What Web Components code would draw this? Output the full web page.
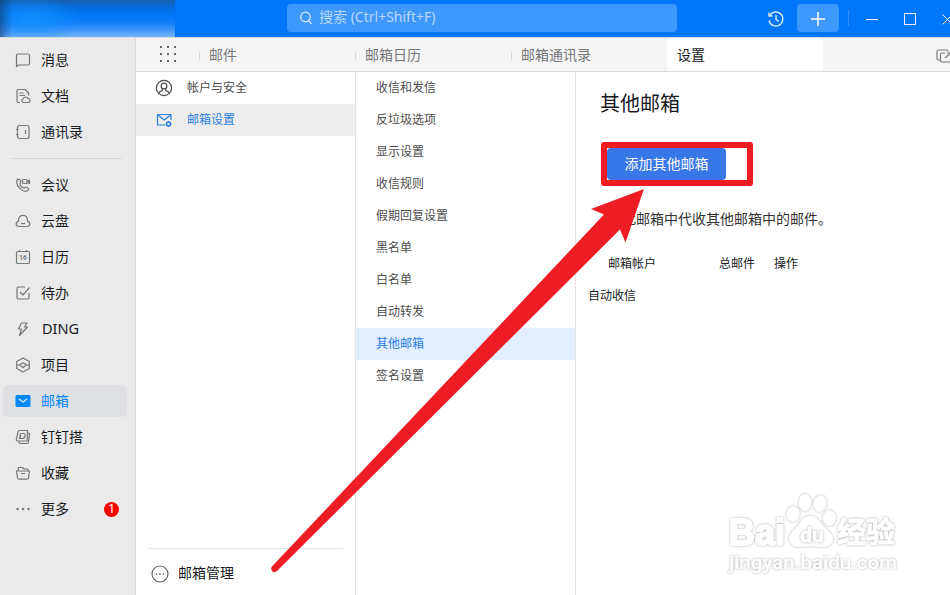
<!DOCTYPE html>
<html lang="zh-CN">
<head>
<meta charset="utf-8">
<title>设置</title>
<style>
    body {
        margin: 0;
        width: 950px;
        height: 595px;
        overflow: hidden;
        background: #fff;
        font-family: "Noto Sans CJK SC", sans-serif;
        font-size: 14px;
        color: #171a1d;
    }
</style>
</head>
<body>
<mail-app>
    <top-bar slot="top" placeholder="搜索 (Ctrl+Shift+F)"></top-bar>

    <side-item slot="side" icon="chat">消息</side-item>
    <side-item slot="side" icon="doc">文档</side-item>
    <side-item slot="side" icon="contacts">通讯录</side-item>
    <side-item slot="side" icon="call" split>会议</side-item>
    <side-item slot="side" icon="cloud">云盘</side-item>
    <side-item slot="side" icon="calendar">日历</side-item>
    <side-item slot="side" icon="todo">待办</side-item>
    <side-item slot="side" icon="ding">DING</side-item>
    <side-item slot="side" icon="project">项目</side-item>
    <side-item slot="side" icon="mail" active>邮箱</side-item>
    <side-item slot="side" icon="dingda">钉钉搭</side-item>
    <side-item slot="side" icon="folder">收藏</side-item>
    <side-item slot="side" icon="more" badge="1">更多</side-item>

    <tab-item slot="tabs">邮件</tab-item>
    <tab-item slot="tabs">邮箱日历</tab-item>
    <tab-item slot="tabs">邮箱通讯录</tab-item>
    <tab-item slot="tabs" active>设置</tab-item>

    <menu-row slot="nav" icon="user">帐户与安全</menu-row>
    <menu-row slot="nav" icon="mailset" active>邮箱设置</menu-row>

    <menu-row slot="menu">收信和发信</menu-row>
    <menu-row slot="menu">反垃圾选项</menu-row>
    <menu-row slot="menu">显示设置</menu-row>
    <menu-row slot="menu">收信规则</menu-row>
    <menu-row slot="menu">假期回复设置</menu-row>
    <menu-row slot="menu">黑名单</menu-row>
    <menu-row slot="menu">白名单</menu-row>
    <menu-row slot="menu">自动转发</menu-row>
    <menu-row slot="menu" active>其他邮箱</menu-row>
    <menu-row slot="menu">签名设置</menu-row>

    <other-mail slot="page"></other-mail>
</mail-app>
<arrow-mark></arrow-mark>
<water-mark></water-mark>

<script>
//icon drawings: [size, inner svg]
const icons = {
    chat: [16, '<path d="M1.500 14.500V3.500a1.500 1.500 0 0 1 1.500-1.500h10a1.500 1.500 0 0 1 1.500 1.500v8a1.500 1.500 0 0 1-1.500 1.500H4z"/>'],
    doc: [16, '<path d="M5 14.500H3.500A1.500 1.500 0 0 1 2 13V3a1.500 1.500 0 0 1 1.500-1.500H10L13.500 5v2.500M4.500 5h4M4.500 7.500H10"/><path d="M8.500 14.500a1.900 1.900 0 0 1-.3-3.700 2.500 2.500 0 0 1 4.700-.3 2 2 0 0 1 .3 4z"/>'],
    contacts: [16, '<rect x="2.500" y="1.500" width="11.500" height="13" rx="2"/><path d="M10.500 6v4M1 5.500h2.500M1 10.500h2.500"/>'],
    call: [16, '<path d="M2 3.200c1.500-2 2.500-1.200 3.700 1 .7 1.300-1 1.700-.8 2.800.3 1.600 2.300 3.700 3.900 4 1.200.2 1.600-1.500 2.800-.8 2.200 1.200 2.900 2.200 1 3.600C8.500 16.500.2 9 2 3.200z"/><rect x="7.500" y="2.500" width="4.500" height="4" rx="1"/><path d="M12 4.500l2.500-1.500v3.500L12 5.500"/>'],
    cloud: [16, '<path d="M4.300 13.500C.3 13.500.3 9.300 3.500 8.300 3.300 4.500 5 2.300 8 2.300s4.700 2.200 4.500 6c3.200 1 3.200 5.200-.8 5.200z"/><path d="M6 10c1.200.9 2.800.9 4 0"/>'],
    calendar: [16, '<rect x="1.500" y="2.500" width="13" height="12" rx="1.200"/><path d="M4.500 1v1.500M11.500 1v1.500"/><text x="8" y="10.800" text-anchor="middle" font-family="Roboto, sans-serif" font-size="6.500" font-weight="700" fill="currentColor" stroke="none">16</text>'],
    todo: [16, '<path d="M10 2H3.500A1.500 1.500 0 0 0 2 3.500v9A1.500 1.500 0 0 0 3.500 14h9a1.500 1.500 0 0 0 1.500-1.500V8M5 7l3 3 6.500-7.500"/>'],
    ding: [16, '<path d="M6.500 2L3.500 8h3L4.500 14.500 12.500 6H9.500L12 2z"/>'],
    project: [16, '<path d="M8 1l6.300 3.500v7L8 15l-6.300-3.500v-7z"/><path d="M2 8h2.500L8 5.700 11.500 8H14M4.500 8L8 10.500 11.500 8"/>'],
    mail: [16, '<rect x=".5" y="2" width="15" height="12" rx="1.500" fill="currentColor" stroke="none"/><path d="M4 6l4 3 4-3" stroke="#dee0e3" stroke-width="1.500"/>'],
    dingda: [16, '<path d="M4.500 1.500h8l-.3 10.500H2.500a1.200 1.200 0 0 1-1.200-1.400L3 2.800A1.500 1.500 0 0 1 4.500 1.500z"/><path d="M13 4l1.500.5-1 8.500a1.500 1.500 0 0 1-1.500 1.500H5L3.500 12.500M5.500 4.500h2.700c3.300 0 2 5-1.200 5H4.500zM6 6L4.500 9.500"/>'],
    folder: [16, '<path d="M3 6l.5-3.500h4L9 4h4v2M1.500 6h13l-1 7a1.500 1.500 0 0 1-1.500 1.200H4A1.500 1.500 0 0 1 2.500 13zM6 8.500h4"/>'],
    more: [16, '<g fill="currentColor" stroke="none"><circle cx="2.500" cy="8" r="1.200"/><circle cx="8" cy="8" r="1.200"/><circle cx="13.500" cy="8" r="1.200"/></g>'],
    search: [14, '<circle cx="6.500" cy="6" r="4.800"/><path d="M9.500 9.500l3 3.500"/>'],
    history: [18, '<path d="M2 2.500V6h3.500M2.500 6A7 7 0 1 1 2 10.500M9 5v4.500l3 2" stroke-width="1.400"/>'],
    plus: [16, '<path d="M8 1v14M1 8h14" stroke-width="1.500"/>'],
    grid: [16, '<g fill="currentColor" stroke="none">' + [1, 8, 15].map(y => [1, 8, 15].map(x => `<rect x="${x - 1}" y="${y - 1}" width="2" height="2"/>`).join('')).join('') + '</g>'],
    user: [18, '<circle cx="9" cy="9" r="7.600"/><circle cx="9" cy="7" r="2.900"/><path d="M3.700 14.300c.7-1.700 1.700-2.300 3.600-2.600V9.500M14.300 14.300c-.7-1.700-1.700-2.300-3.600-2.600V9.500"/>'],
    mailset: [16, '<path d="M9 13H1.500V2.500h13.500V8M2 3l6.200 5L14.500 3"/><circle cx="12.500" cy="12" r="2" stroke-width="1.600"/><path d="M12.500 9v1M12.500 14v1M10 10.500l.8.500M15 10.500l-.8.500M10 13.500l.8-.5M15 13.500l-.8-.5"/>'],
    dots: [18, '<circle cx="9" cy="9" r="8"/><path d="M4.700 9h1.500M8.200 9h1.500M11.700 9h1.500" stroke-width="1.600"/>'],
    popout: [18, '<path d="M5 12H3.500A1.500 1.500 0 0 1 2 10.500v-7A1.500 1.500 0 0 1 3.500 2h8A1.500 1.500 0 0 1 13 3.500M10 5H7a1.500 1.500 0 0 0-1.500 1.500v6A1.500 1.500 0 0 0 7 14h7a1.500 1.500 0 0 0 1.500-1.500V10M10 10l5.500-5M12 5h3.500v3"/>']
};

function icon(name) {
    const [size, body] = icons[name];
    return `<svg class="icon" width="${size}" height="${size}" viewBox="0 0 ${size} ${size}" fill="none" stroke="currentColor" stroke-width="1.200" stroke-linejoin="round">${body}</svg>`;
}

//base class, every element fills its shadow root from render()
class BaseElement extends HTMLElement {
    constructor() {
        super();
        this.attachShadow({mode: "open"});
    }
    connectedCallback() {
        const template = document.createElement("template");
        template.innerHTML = `<style>* { box-sizing: border-box; } svg { display: block; flex: none; } .label { margin-bottom: 2px; }</style>` + this.render();
        this.shadowRoot.appendChild(template.content.cloneNode(true));
    }
}

//page frame
class MailApp extends BaseElement {
    render() {
        return `
<style>
    :host { display: grid; grid-template: 37px 558px / 136px 814px; width: 950px; height: 595px; }
    .top { grid-column: 1 / 3; }
    .side { background: #eaeaea; border-right: 1px solid #d7d8d9; border-top: 1px solid #d9dadb; padding: 6px 8px 0 3px; display: flex; flex-direction: column; gap: 4px; }
    .main { display: flex; flex-direction: column; border-top: 1px solid #d9dadb; }
    .tabs { height: 34px; display: flex; background: #f5f5f5; border-bottom: 1px solid #d9d9d9; overflow: hidden; }
    .grid { width: 63px; padding: 8px 0 0 24px; color: #666; flex: none; }
    .pop { margin: 10px 0 0 auto; width: 15px; overflow: hidden; color: #777; }
    .cols { flex: 1; display: grid; grid-template-columns: 220px 220px 1fr; }
    .nav, .menu { border-right: 1px solid #e1e1e1; display: flex; flex-direction: column; }
    .nav { --active: #ededed; --pad: 19px; }
    .menu { --active: #e1eeff; --pad: 20px; }
    .manage { margin: auto 12px 0; height: 47px; border-top: 1px solid #e6e6e6; padding: 4px 0 0 3px; display: flex; align-items: center; gap: 9px; line-height: 20px; }
    .manage svg { color: #666; }
    .manage .label { margin-bottom: 4px; }
</style>
<div class="top"><slot name="top"></slot></div>
<div class="side"><slot name="side"></slot></div>
<div class="main">
    <div class="tabs"><div class="grid">${icon("grid")}</div><slot name="tabs"></slot><div class="pop">${icon("popout")}</div></div>
    <div class="cols">
        <div class="nav"><slot name="nav"></slot><div class="manage">${icon("dots")}<span class="label">邮箱管理</span></div></div>
        <div class="menu"><slot name="menu"></slot></div>
        <slot name="page"></slot>
    </div>
</div>`;
    }
}

class TopBar extends BaseElement {
    render() {
        return `
<style>
    :host { display: flex; height: 37px; background: #0077fa; color: #d9ebff; overflow: hidden; }
    .blur { flex: none; width: 175px; background: linear-gradient(90deg, rgba(20,70,125,.65), rgba(0,119,250,0) 12px), radial-gradient(ellipse 50px 24px at 32px 20px, rgba(20,145,255,.9), rgba(20,145,255,0)), linear-gradient(#1660b0, #056dde 8px, #0077f5 15px, #0e7cf8 22px, #3f96fa 30px, #76b4fc); }
    .search { flex: none; margin: 4px 0 0 112px; width: 390px; height: 28px; border-radius: 4px; background: #3e97fb; display: flex; align-items: center; padding-left: 12px; gap: 6px; color: #b7d9ff; line-height: 20px; font-family: "Noto Sans", "Noto Sans CJK SC", sans-serif; }
    .search svg { color: #d9ebff; }
    .search .label { width: 124px; white-space: nowrap; }
    .tools { display: flex; align-items: flex-start; flex: none; }
    .tools > * { flex: none; }
    .history { margin: 10px 12px 0 90px; }
    .plus { margin-top: 4px; width: 42px; height: 28px; padding-top: 2px; border-radius: 4px; background: #3e97fb; display: grid; place-items: center; color: #fff; }
    .line { width: 1px; height: 16px; margin: 10px 17px 0 9px; background: #338ffb; }
    .min { width: 12px; height: 1px; margin: 19px 26px 0 0; background: #e6f2ff; }
    .max { width: 12px; height: 12px; margin: 13px 26px 0 0; border: 1px solid #e6f2ff; }
    .close { margin-top: 14px; }
</style>
<div class="blur"></div>
<div class="search">${icon("search")}<span class="label">${this.getAttribute("placeholder")}</span></div>
<div class="tools">
    <div class="history">${icon("history")}</div>
    <div class="plus">${icon("plus")}</div>
    <div class="line"></div>
    <div class="min"></div>
    <div class="max"></div>
    <div class="close"><svg width="11" height="11" viewBox="0 0 11 11" fill="none" stroke="currentColor"><path d="M.5.5l10 10M10.500.5l-10 10"/></svg></div>
</div>`;
    }
}

class SideItem extends BaseElement {
    render() {
        const badge = this.getAttribute("badge");
        return `
<style>
    :host { display: block; flex: none; }
    .split { height: 1px; margin: 6px 5px 10px 8px; background: #d5d6d7; }
    .row { height: 32px; display: flex; align-items: center; padding: 0 8px 0 12px; gap: 10px; border-radius: 5px; width: 124px; line-height: 20px; }
    .row svg { color: #747677; }
    :host([icon="ding"]) .label { font-family: "Noto Sans", sans-serif; padding-left: 1px; font-size: 14.500px; }
    :host([active]) .row { background: #dee0e3; color: #0089ff; }
    :host([active]) svg { color: #0089ff; }
    .badge { margin-left: auto; width: 15px; height: 15px; border-radius: 50%; background: #f00; color: #fff; font: 12px/15px Roboto, sans-serif; text-align: center; }
</style>
${this.hasAttribute("split") ? '<div class="split"></div>' : ''}
<div class="row">${icon(this.getAttribute("icon"))}<span class="label"><slot></slot></span>${badge ? `<span class="badge">${badge}</span>` : ''}</div>`;
    }
}

class TabItem extends BaseElement {
    render() {
        return `
<style>
    :host { display: flex; align-items: center; width: 156px; height: 33px; color: #747677; flex: none; line-height: 20px; }
    i { width: 1px; height: 8px; margin: 2px 9px 0 0; background: #d9d9d9; }
    :host([active]) { background: #fff; color: #171a1d; border-radius: 5px 5px 0 0; }
    :host([active]) i { background: none; }
</style>
<i></i><span class="label"><slot></slot></span>`;
    }
}

class MenuRow extends BaseElement {
    render() {
        const name = this.getAttribute("icon");
        return `
<style>
    :host { display: flex; align-items: center; gap: 14px; height: 32px; flex: none; padding-left: var(--pad); font-size: 12px; line-height: 18px; color: #4d4d4d; }
    :host([active]) { background: var(--active); color: #2a7fe0; }
    .box { width: 18px; display: grid; place-items: center; }
</style>
${name ? `<div class="box">${icon(name)}</div>` : ''}<span class="label"><slot></slot></span>`;
    }
}

//settings page
class OtherMail extends BaseElement {
    render() {
        return `
<style>
    :host { display: block; padding: 16px 0 0 12px; }
    h1 { margin: 0 0 24px 12px; font-size: 20px; font-weight: 400; line-height: 30px; }
    .mark { margin-left: 13px; width: 152px; height: 44px; border: 6px solid #ee1c24; border-radius: 3px; }
    button { display: block; width: 119px; height: 32px; padding: 0 0 2px; border: 0; border-radius: 4px; background: #3777e8; color: #fff; font: inherit; line-height: 30px; }
    p { margin: 22px 0 0 20px; line-height: 20px; color: #333; }
    .head { display: grid; grid-template-columns: 111px 55px 1fr; margin: 25px 0 0 20px; }
    .head, .row { font-size: 12px; line-height: 20px; }
    .row { margin-top: 12px; }
</style>
<h1>其他邮箱</h1>
<div class="mark"><button>添加其他邮箱</button></div>
<p>在此邮箱中代收其他邮箱中的邮件。</p>
<div class="head"><span>邮箱帐户</span><span>总邮件</span><span>操作</span></div>
<div class="row">自动收信</div>`;
    }
}

//red arrow over the page
class ArrowMark extends BaseElement {
    render() {
        return `
<style>
    :host { position: absolute; left: 0; top: 0; pointer-events: none; }
</style>
<svg width="950" height="595" viewBox="0 0 950 595"><path fill="#ee1c24" d="M644 189L591 209 604 214.500 271.700 566.800Q270.500 569.500 272.500 571.500 274.500 573 277 571L620 229.500 625.500 242.500z"/></svg>`;
    }
}

//white logo, only its soft grey rim shows on the page
class WaterMark extends BaseElement {
    render() {
        return `
<style>
    :host { position: absolute; left: 720px; top: 485px; pointer-events: none; }
    svg { fill: #fff; stroke: #fff; stroke-width: 1; stroke-linejoin: round; }
    svg > * { filter: drop-shadow(0 0 .8px #aaa); }
    .bold { stroke-width: 2; }
    .url { stroke-width: .3; }
</style>
<svg width="190" height="95" viewBox="0 0 190 95">
    <text class="bold" x="9" y="60" font-family="Liberation Sans, sans-serif" font-size="36" font-weight="700" textLength="56" lengthAdjust="spacingAndGlyphs">Bai</text>
    <ellipse cx="73" cy="29" rx="6.200" ry="7.500"/>
    <ellipse cx="85" cy="17.500" rx="6" ry="8.500"/>
    <ellipse cx="100" cy="18.500" rx="6.200" ry="8" transform="rotate(12 100 18.500)"/>
    <ellipse cx="109.500" cy="33" rx="6.200" ry="7.500"/>
    <path d="M90 31c8 0 10 7 15 12 5 4 9 9 7 14-3 7-13 4-22 4s-15 3-19-3c-4-7 1-11 6-16 4-4 5-11 13-11z"/>
    <text x="80" y="57" font-family="Liberation Sans, sans-serif" font-size="20" font-weight="700" textLength="24" lengthAdjust="spacingAndGlyphs">du</text>
    <text x="117" y="58" font-family="Noto Sans CJK SC, sans-serif" font-size="29" font-weight="700" textLength="58">经验</text>
    <text class="url" x="9" y="84" font-family="Roboto, sans-serif" font-size="19" font-weight="500" textLength="168" lengthAdjust="spacingAndGlyphs">jingyan.baidu.com</text>
</svg>`;
    }
}

customElements.define("mail-app", MailApp);
customElements.define("top-bar", TopBar);
customElements.define("side-item", SideItem);
customElements.define("tab-item", TabItem);
customElements.define("menu-row", MenuRow);
customElements.define("other-mail", OtherMail);
customElements.define("arrow-mark", ArrowMark);
customElements.define("water-mark", WaterMark);
</script>
</body>
</html>
